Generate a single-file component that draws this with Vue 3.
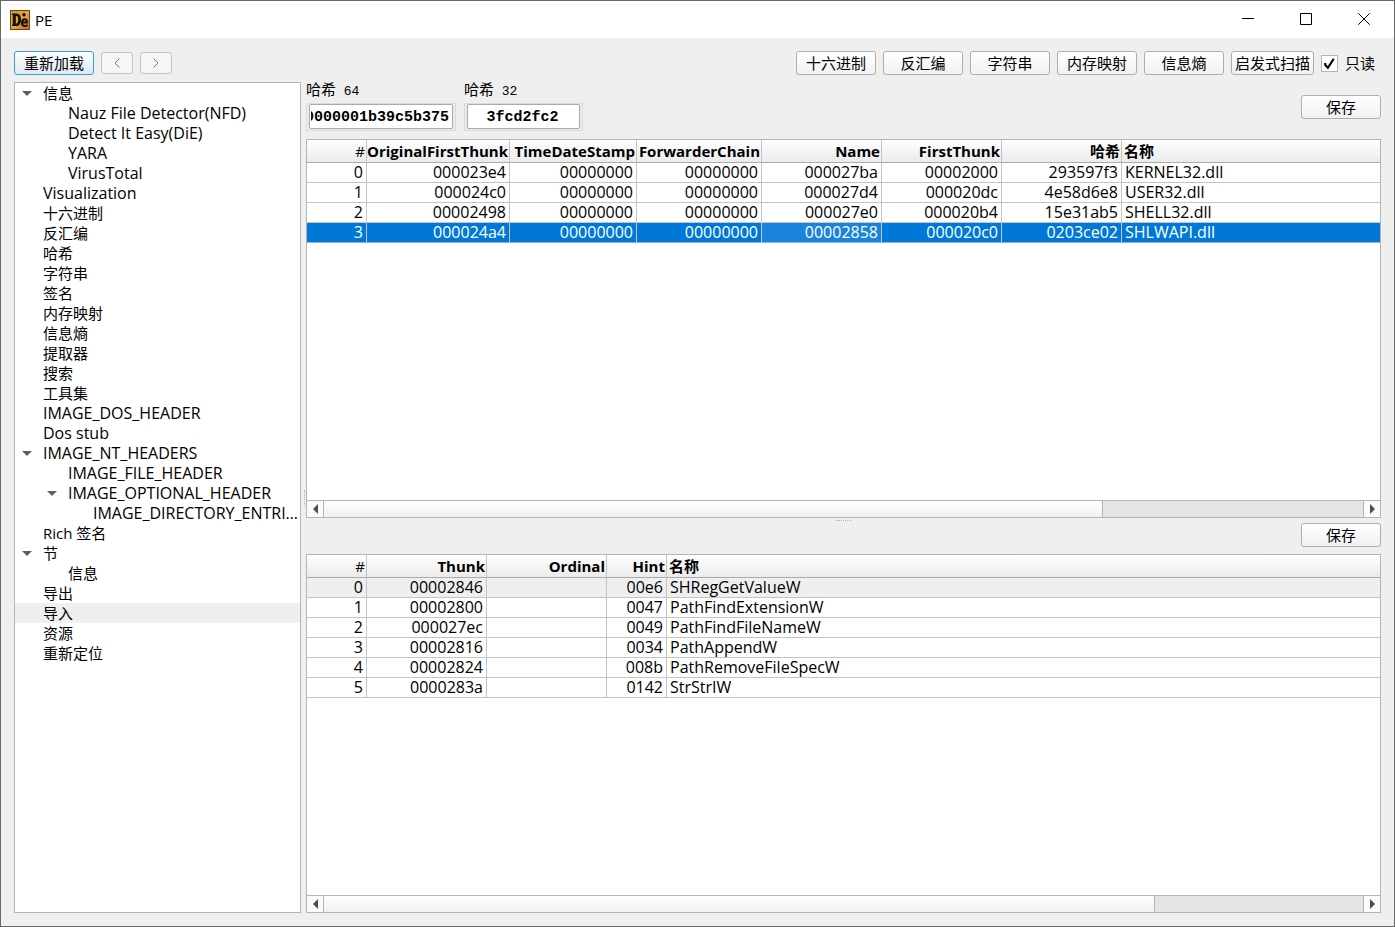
<script setup>
import { ref, onMounted } from 'vue'

const tree = [
  { text: '信息', depth: 0, open: true },
  { text: 'Nauz File Detector(NFD)', depth: 1 },
  { text: 'Detect It Easy(DiE)', depth: 1 },
  { text: 'YARA', depth: 1 },
  { text: 'VirusTotal', depth: 1 },
  { text: 'Visualization', depth: 0 },
  { text: '十六进制', depth: 0 },
  { text: '反汇编', depth: 0 },
  { text: '哈希', depth: 0 },
  { text: '字符串', depth: 0 },
  { text: '签名', depth: 0 },
  { text: '内存映射', depth: 0 },
  { text: '信息熵', depth: 0 },
  { text: '提取器', depth: 0 },
  { text: '搜索', depth: 0 },
  { text: '工具集', depth: 0 },
  { text: 'IMAGE_DOS_HEADER', depth: 0 },
  { text: 'Dos stub', depth: 0 },
  { text: 'IMAGE_NT_HEADERS', depth: 0, open: true },
  { text: 'IMAGE_FILE_HEADER', depth: 1 },
  { text: 'IMAGE_OPTIONAL_HEADER', depth: 1, open: true },
  { text: 'IMAGE_DIRECTORY_ENTRIES', depth: 2 },
  { text: 'Rich 签名', depth: 0 },
  { text: '节', depth: 0, open: true },
  { text: '信息', depth: 1 },
  { text: '导出', depth: 0 },
  { text: '导入', depth: 0, selected: true },
  { text: '资源', depth: 0 },
  { text: '重新定位', depth: 0 }
]

const hasHan = (text) => /[\u4e00-\u9fff]/.test(text)

const tools = ['十六进制', '反汇编', '字符串', '内存映射', '信息熵', '启发式扫描']

const importHeads = ['#', 'OriginalFirstThunk', 'TimeDateStamp', 'ForwarderChain', 'Name', 'FirstThunk', '哈希', '名称']
const imports = [
  ['0', '000023e4', '00000000', '00000000', '000027ba', '00002000', '293597f3', 'KERNEL32.dll'],
  ['1', '000024c0', '00000000', '00000000', '000027d4', '000020dc', '4e58d6e8', 'USER32.dll'],
  ['2', '00002498', '00000000', '00000000', '000027e0', '000020b4', '15e31ab5', 'SHELL32.dll'],
  ['3', '000024a4', '00000000', '00000000', '00002858', '000020c0', '0203ce02', 'SHLWAPI.dll']
]

const thunkHeads = ['#', 'Thunk', 'Ordinal', 'Hint', '名称']
const thunks = [
  ['0', '00002846', '', '00e6', 'SHRegGetValueW'],
  ['1', '00002800', '', '0047', 'PathFindExtensionW'],
  ['2', '000027ec', '', '0049', 'PathFindFileNameW'],
  ['3', '00002816', '', '0034', 'PathAppendW'],
  ['4', '00002824', '', '008b', 'PathRemoveFileSpecW'],
  ['5', '0000283a', '', '0142', 'StrStrIW']
]

const readonlyMode = ref(true)
const hash64 = ref('0000001b39c5b375')
const hash32 = ref('3fcd2fc2')
const hash64Field = ref(null)

onMounted(() => {
  hash64Field.value.scrollLeft = hash64Field.value.scrollWidth
})
</script>

<template>
  <div class="window">
    <header class="titlebar">
      <svg class="logo" viewBox="0 0 20 20" aria-hidden="true">
        <defs>
          <linearGradient id="logoFill" x1="0" y1="0" x2="1" y2="1">
            <stop offset="0" stop-color="#d99a24" />
            <stop offset="0.5" stop-color="#e8a83a" />
            <stop offset="1" stop-color="#d0611f" />
          </linearGradient>
        </defs>
        <rect x="0.5" y="0.5" width="19" height="19" fill="url(#logoFill)" stroke="#6b4312" />
        <path fill="#15100a" fill-rule="evenodd" d="M2 3.500h4.500c3 0 4.500 2 4.500 6s-1.500 6.500-4.500 6.500H2v-1.500h.8v-9.500H2zM5.800 6v7.500h.7c1.200 0 1.700-1.200 1.700-4S7.700 6 6.500 6z" />
        <circle cx="14" cy="4.800" r="1.800" fill="#15100a" />
        <path fill="none" stroke="#15100a" stroke-width="2" d="M12 12.500h5c0-2.200-.8-3.300-2.400-3.300s-2.600 1.300-2.600 3.500 1.100 3.300 2.800 3.300c1.100 0 1.900-.4 2.600-1.200" />
      </svg>
      <h1 class="title">PE</h1>
      <div class="controls">
        <button type="button" aria-label="最小化"><svg viewBox="0 0 12 12"><path d="M0 5.500h12" /></svg></button>
        <button type="button" aria-label="最大化"><svg viewBox="0 0 12 12"><path d="M.5.5h11v11H.5z" /></svg></button>
        <button type="button" aria-label="关闭"><svg viewBox="0 0 12 12"><path d="M.3.3l11.400 11.400M11.700.3L.3 11.700" /></svg></button>
      </div>
    </header>

    <div class="toolbar">
      <button type="button" class="btn primary">重新加载</button>
      <button type="button" class="btn nav" aria-label="后退"><svg viewBox="0 0 6 10"><path d="M5.500.5L1 5l4.500 4.500" /></svg></button>
      <button type="button" class="btn nav" aria-label="前进"><svg viewBox="0 0 6 10"><path d="M.5.5L5 5 .5 9.500" /></svg></button>
      <span class="spacer"></span>
      <button v-for="t in tools" :key="t" type="button" class="btn">{{ t }}</button>
      <label class="check">
        <span class="box">
          <input v-model="readonlyMode" type="checkbox" />
          <svg v-if="readonlyMode" viewBox="0 0 16 16"><path d="M4 7.500v2L6.500 12 12 3.500" /></svg>
        </span>
        只读
      </label>
    </div>

    <main class="body">
      <ul class="tree" role="tree">
        <li
          v-for="(n, i) in tree"
          :key="i"
          role="treeitem"
          :aria-level="n.depth + 1"
          :aria-selected="!!n.selected"
          :class="['node', 'depth-' + n.depth, { selected: n.selected }]"
        >
          <span class="twisty"><button v-if="n.open" type="button" aria-label="折叠"><svg viewBox="0 0 10 5"><path d="M0 0h10L5 5z" /></svg></button></span>
          <span :class="['label', { han: hasHan(n.text) }]">{{ n.text }}</span>
        </li>
      </ul>

      <div class="vsplit"></div>

      <div class="right">
        <section class="pane">
          <div class="hashes">
            <div class="field wide">
              <label for="h64"><span class="han">哈希</span> 64</label>
              <div class="frame"><input id="h64" ref="hash64Field" v-model="hash64" type="text" /></div>
            </div>
            <div class="field">
              <label for="h32"><span class="han">哈希</span> 32</label>
              <div class="frame"><input id="h32" v-model="hash32" type="text" /></div>
            </div>
            <span class="spacer"></span>
            <button type="button" class="btn">保存</button>
          </div>
          <div class="view">
            <div class="rows">
              <table>
                <colgroup>
                  <col class="c60" /><col class="c143" /><col class="c127" /><col class="c125" />
                  <col class="c120" /><col class="c120" /><col class="c120" /><col />
                </colgroup>
                <thead>
                  <tr><th v-for="h in importHeads" :key="h" scope="col">{{ h }}</th></tr>
                </thead>
                <tbody>
                  <tr v-for="(r, i) in imports" :key="i" :class="{ active: i === 3 }">
                    <td v-for="(c, j) in r" :key="j" :class="{ current: i === 3 && j === 4 }">{{ c }}</td>
                  </tr>
                </tbody>
              </table>
            </div>
            <div class="scroll">
              <button type="button" aria-label="向左"><svg viewBox="0 0 5 10"><path d="M5 0v10L0 5z" /></svg></button>
              <div class="track"><div class="thumb three-quarters"></div></div>
              <button type="button" aria-label="向右"><svg viewBox="0 0 5 10"><path d="M0 0v10l5-5z" /></svg></button>
            </div>
          </div>
        </section>

        <div class="hsplit"></div>

        <section class="pane">
          <div class="actions"><button type="button" class="btn">保存</button></div>
          <div class="view">
            <div class="rows">
              <table>
                <colgroup>
                  <col class="c60" /><col class="c120" /><col class="c120" /><col class="c60" /><col />
                </colgroup>
                <thead>
                  <tr><th v-for="h in thunkHeads" :key="h" scope="col">{{ h }}</th></tr>
                </thead>
                <tbody>
                  <tr v-for="(r, i) in thunks" :key="i" :class="{ muted: i === 0 }">
                    <td v-for="(c, j) in r" :key="j">{{ c }}</td>
                  </tr>
                </tbody>
              </table>
            </div>
            <div class="scroll">
              <button type="button" aria-label="向左"><svg viewBox="0 0 5 10"><path d="M5 0v10L0 5z" /></svg></button>
              <div class="track"><div class="thumb four-fifths"></div></div>
              <button type="button" aria-label="向右"><svg viewBox="0 0 5 10"><path d="M0 0v10l5-5z" /></svg></button>
            </div>
          </div>
        </section>
      </div>
    </main>
  </div>
</template>

<style>
html,
body,
#app {
  height: 100%;
}
</style>

<style scoped>
* {
  box-sizing: border-box;
}

.window {
  display: flex;
  flex-direction: column;
  min-height: 100%;
  border: 1px solid #696969;
  background: #efefef;
  color: #000;
  font: 15px/20px "Open Sans", "Noto Sans CJK SC", sans-serif;
}

button,
input {
  margin: 0;
  padding: 0;
  font: inherit;
  color: inherit;
}

svg {
  display: block;
}

.spacer {
  flex: 1;
}

/* title bar */
.titlebar {
  display: flex;
  align-items: center;
  height: 37px;
  padding-left: 9px;
  background: #fff;
}

.logo {
  width: 20px;
  height: 20px;
}

.title {
  flex: 1;
  margin: 0 0 0 5px;
  font-size: 15px;
  font-weight: 400;
}

.controls {
  display: flex;
  align-self: stretch;
  padding: 0 1px 1px 0;
}

.controls button {
  display: grid;
  place-items: center;
  width: 58px;
  border: 0;
  background: none;
}

.controls svg {
  width: 12px;
  height: 12px;
  fill: none;
  stroke: #000;
}

/* toolbar */
.toolbar {
  display: flex;
  align-items: center;
  gap: 7px;
  padding: 13px 13px 7px;
}

.btn {
  min-width: 80px;
  height: 24px;
  padding: 0 3px;
  border: 1px solid #aeaeae;
  border-radius: 3px;
  background: linear-gradient(#fff, #f1f1f1);
  line-height: 22px;
  white-space: nowrap;
}

.btn.primary {
  border-color: #3f9ad6;
  background: linear-gradient(#fdfeff, #dfe9f3);
}

.btn.nav {
  display: grid;
  place-items: center;
  min-width: 0;
  width: 32px;
  height: 22px;
  border-color: #c4c4c4;
  background: #f6f6f6;
}

.btn.nav svg {
  width: 6px;
  height: 10px;
  fill: none;
  stroke: #777;
}

.check {
  display: flex;
  align-items: center;
  gap: 7px;
  padding-right: 6px;
}

.box {
  position: relative;
  width: 17px;
  height: 17px;
}

.box input {
  display: block;
  width: 17px;
  height: 17px;
  appearance: none;
  border: 1px solid #b4b4b4;
  background: #fff;
}

.box svg {
  position: absolute;
  inset: 0;
  fill: none;
  stroke: #000;
  stroke-width: 2;
  pointer-events: none;
}

/* body */
.body {
  flex: 1;
  display: grid;
  grid-template-columns: 287px 5px minmax(0, 1fr);
  padding: 0 13px 13px;
}

.tree {
  margin: 0;
  padding: 0;
  border: 1px solid #b5b5b5;
  background: #fff;
  list-style: none;
  font-size: 16px;
}

.node {
  display: flex;
  height: 20px;
}

.depth-1 {
  padding-left: 25px;
}

.depth-2 {
  padding-left: 50px;
}

.node.selected {
  background: #efefef;
}

.twisty {
  flex: none;
  width: 28px;
  padding: 8px 0 0 7px;
}

.twisty button {
  display: block;
  border: 0;
  background: none;
}

.twisty svg {
  width: 10px;
  height: 5px;
  fill: #5f5f5f;
}

.label {
  overflow: hidden;
  text-overflow: ellipsis;
  white-space: nowrap;
}

.vsplit {
  align-self: center;
  justify-self: end;
  width: 2px;
  height: 16px;
  border-left: 1px dotted #b5b5b5;
}

.hsplit {
  align-self: center;
  justify-self: center;
  width: 16px;
  border-top: 1px dotted #b5b5b5;
}

.right {
  display: grid;
  grid-template-rows: 436fr 5px 390fr;
}

.pane {
  display: flex;
  flex-direction: column;
  min-height: 0;
}

.hashes {
  display: flex;
  align-items: center;
  gap: 8px;
  padding-bottom: 8px;
}

.field {
  width: 119px;
  font: 13px/20px "Liberation Mono", "Noto Sans CJK SC", monospace;
}

.field.wide {
  width: 150px;
}

.field label {
  display: block;
  height: 21px;
}

.han {
  font-size: 15px;
}

.frame {
  padding: 0 2px 1px;
  border: 1px solid #dcdcdc;
  background: #e9e9e9;
}

.frame input {
  display: block;
  width: 100%;
  height: 25px;
  padding: 2px 3px 0 1px;
  border: 1px solid #ababab;
  border-radius: 2px;
  background: #fff;
  font-size: 15px;
  font-weight: 700;
  text-align: center;
}

.actions {
  display: flex;
  justify-content: flex-end;
  padding-bottom: 7px;
}

.view {
  flex: 1;
  display: flex;
  flex-direction: column;
  min-height: 0;
  border: 1px solid #b5b5b5;
  background: #fff;
}

.rows {
  flex: 1;
  overflow: hidden;
}

table {
  width: 100%;
  table-layout: fixed;
  border-collapse: separate;
  border-spacing: 0;
}

.c60 { width: 60px; }
.c120 { width: 120px; }
.c125 { width: 125px; }
.c127 { width: 127px; }
.c143 { width: 143px; }

th,
td {
  border: solid #c4c4c4;
  border-width: 0 1px 1px 0;
  text-align: right;
  white-space: nowrap;
}

th {
  height: 23px;
  padding: 0 1px 0 0;
  border-bottom-color: #ababab;
  background: linear-gradient(#fff, #ebebeb);
  line-height: 22px;
}

th:first-child {
  font-weight: 400;
}

td {
  height: 20px;
  padding: 0 3px;
  font-size: 16px;
  line-height: 19px;
}

th:last-child,
td:last-child {
  border-right: 0;
  text-align: left;
}

th:last-child {
  padding-left: 2px;
}

.active td {
  background: #0078d7;
  border-bottom-color: #8fb4d4;
  color: #fff;
}

.active .current {
  background: #1a84da;
}

.muted td {
  background: #efefef;
}

.scroll {
  display: flex;
  height: 17px;
  border-top: 1px solid #b5b5b5;
}

.scroll button {
  display: grid;
  place-items: center;
  width: 16px;
  border: 0;
  background: #fafafa;
}

.scroll svg {
  width: 5px;
  height: 10px;
  fill: #4d4d4d;
}

.track {
  flex: 1;
  border: solid #b5b5b5;
  border-width: 0 1px;
  background: #e4e4e4;
}

.thumb {
  height: 100%;
  border-right: 1px solid #b5b5b5;
  background: linear-gradient(#fff, #f0f0f0);
}

.three-quarters { width: 75%; }
.four-fifths { width: 80%; }
</style>
